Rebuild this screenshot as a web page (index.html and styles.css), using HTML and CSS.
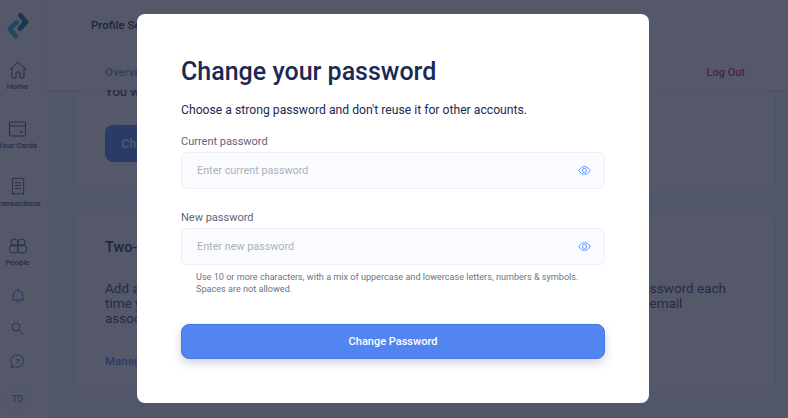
FILE: index.html
```html
<!DOCTYPE html>
<html>
<head>
  <meta charset="utf-8">
  <title>Change your password</title>
  <link rel="stylesheet" href="styles.css">
</head>
<body>

<div class="app">
  <nav class="sidebar">
    <svg class="logo" width="24" height="28" viewBox="0 0 24 28">
      <path d="M14.500 3.500l5.500 6.500-6 6.500" class="logo-dark"/>
      <path d="M10.500 10.500l-6.500 6 5.500 7.500" class="logo-teal"/>
    </svg>
    <a class="nav-item">
      <svg width="18" height="17" viewBox="0 0 18 17"><path d="M.5 8L9 .7 17.500 8M3 6.500v10h4v-6h4v6h4v-10" class="line"/></svg>
      <span>Home</span>
    </a>
    <a class="nav-item">
      <svg width="18" height="15" viewBox="0 0 18 15"><rect x=".5" y=".5" width="16" height="14" rx="1" class="line"/><path d="M.5 4.500h16M11 10.500h3" class="line"/></svg>
      <span>Your Cards</span>
    </a>
    <a class="nav-item">
      <svg width="14" height="19" viewBox="0 0 14 19"><path d="M1 .5h12v17l-2-1.500-2 1.500-2-1.500-2 1.500-2-1.500-2 1.500zM3.500 5h7M3.500 8h7M3.500 11h7" class="line"/></svg>
      <span>Transactions</span>
    </a>
    <a class="nav-item nav-people">
      <svg width="18" height="15" viewBox="0 0 18 15"><circle cx="5.500" cy="4" r="3.500" class="line"/><circle cx="12.500" cy="4" r="3.500" class="line"/><rect x=".5" y="6.500" width="9" height="8" rx="3.500" class="line"/><rect x="8.500" y="6.500" width="9" height="8" rx="3.500" class="line"/></svg>
      <span>People</span>
    </a>
    <a class="nav-icon">
      <svg width="14" height="15" viewBox="0 0 14 15"><path d="M1 12c1.500-1 1.500-2.500 1.500-5a4.500 4.500 0 0 1 9 0c0 2.500 0 4 1.500 5zM5.500 13.500c.5 1 2.500 1 3 0M7 2.500V.5" class="line blue"/></svg>
    </a>
    <a class="nav-icon">
      <svg width="13" height="13" viewBox="0 0 13 13"><circle cx="5" cy="5" r="4" class="line blue"/><path d="M8 8l4.500 4.500" class="line blue"/></svg>
    </a>
    <a class="nav-icon">
      <svg width="15" height="15" viewBox="0 0 15 15"><path d="M7.800 1a6 6 0 1 1-3 11.200L1 14l1-3.500A6 6 0 0 1 7.800 1z" class="line blue"/><text x="7.800" y="10" text-anchor="middle" class="help-mark">?</text></svg>
    </a>
    <div class="avatar">TD</div>
  </nav>

  <div class="main">
    <header class="topbar">
      <div class="page-title">Profile Settings</div>
      <div class="tabs">
        <span class="tab">Overview</span>
        <span class="logout">Log Out</span>
      </div>
    </header>
    <div class="content">
      <section class="card card-first">
        <p class="card-note">You will be asked to change your password regularly.</p>
        <button class="card-btn">Change Password</button>
      </section>
      <section class="card card-second">
        <h2>Two-Factor Authentication</h2>
        <p class="card-text">Add an extra layer of security to your account. You'll need to enter a code as well as your password each time you sign in. We will send the latest one-time code to your mobile phone number or the email associated with your account.</p>
        <a class="manage">Manage</a>
      </section>
    </div>
  </div>
</div>

<div class="overlay">
  <form class="modal">
    <h1>Change your password</h1>
    <p class="lead">Choose a strong password and don't reuse it for other accounts.</p>

    <label class="field-label">Current password</label>
    <div class="field">
      <span class="placeholder">Enter current password</span>
      <svg class="eye" width="13" height="9" viewBox="0 0 14 10"><path d="M.7 5C2.500 2 4.500.7 7 .7S11.500 2 13.300 5C11.500 8 9.500 9.300 7 9.300S2.500 8 .7 5z" class="eye-line"/><circle cx="7" cy="5" r="2.300" class="eye-line"/></svg>
    </div>

    <label class="field-label second">New password</label>
    <div class="field">
      <span class="placeholder">Enter new password</span>
      <svg class="eye" width="13" height="9" viewBox="0 0 14 10"><path d="M.7 5C2.500 2 4.500.7 7 .7S11.500 2 13.300 5C11.500 8 9.500 9.300 7 9.300S2.500 8 .7 5z" class="eye-line"/><circle cx="7" cy="5" r="2.300" class="eye-line"/></svg>
    </div>
    <p class="hint">Use 10 or more characters, with a mix of uppercase and lowercase letters, numbers &amp; symbols.<br>Spaces are not allowed.</p>

    <button type="button" class="submit">Change Password</button>
  </form>
</div>

</body>
</html>
```
FILE: styles.css
```css
* {
  box-sizing: border-box;
}
html, body {
  margin: 0;
  height: 100%;
  overflow: hidden;
}
body {
  font-family: "Roboto", "Liberation Sans", sans-serif;
  color: #1b2a55;
}
.app {
  display: flex;
  height: 418px;
  background: #f4f6fc;
}
.sidebar {
  width: 47px;
  flex: none;
  background: #fff;
  display: flex;
  flex-direction: column;
  align-items: center;
  padding: 12px 12px 0 0;
  overflow: hidden;
}
.logo {
  flex: none;
  margin-bottom: 21px;
}
.logo-dark, .logo-teal {
  fill: none;
  stroke-width: 5;
  stroke-linecap: round;
  stroke-linejoin: round;
}
.logo-dark {
  stroke: #1f6f95;
}
.logo-teal {
  stroke: #20c8d0;
}
.line {
  fill: none;
  stroke: #3c4a70;
  stroke-width: 1;
}
.line.blue {
  stroke: #3f6fd8;
}
.help-mark {
  font-size: 8px;
  font-weight: 500;
  fill: #3f6fd8;
}
.nav-item {
  display: flex;
  flex-direction: column;
  align-items: center;
  height: 58.5px;
  flex: none;
  width: 70px;
}
.nav-item.nav-people {
  height: 42px;
}
.nav-item svg {
  height: 18px;
  flex: none;
}
.nav-item span {
  margin-top: 3px;
  font-size: 8px;
  line-height: 10px;
  font-weight: 500;
  color: #3c4a70;
  white-space: nowrap;
}
.nav-icon {
  height: 33px;
  flex: none;
  display: flex;
  align-items: center;
  justify-content: center;
}
.avatar {
  width: 26px;
  height: 26px;
  border-radius: 50%;
  flex: none;
  margin-top: 8px;
  background: #fff;
  box-shadow: 0 0 2px rgba(30,40,70,.2);
  color: #10b0a0;
  font-size: 9px;
  font-weight: 500;
  display: flex;
  align-items: center;
  justify-content: center;
}
.main {
  flex: 1;
  display: flex;
  flex-direction: column;
  min-width: 0;
}
.topbar {
  height: 90px;
  flex: none;
  background: #fff;
  box-shadow: 0 1px 3px rgba(30,40,70,.12);
  position: relative;
  padding: 18px 43px 0 44px;
}
.page-title {
  font-size: 11.5px;
  font-weight: 500;
  color: #1b2a55;
}
.tabs {
  display: flex;
  justify-content: space-between;
  align-items: baseline;
  margin-top: 33px;
  font-size: 11.5px;
  font-weight: 500;
}
.tab {
  color: #8a92a8;
  margin-left: 14px;
}
.logout {
  color: #d81c58;
  font-size: 11px;
}
.content {
  flex: 1;
  padding: 0 14px 0 29px;
  overflow: hidden;
}
.card {
  background: #fff;
  border-radius: 8px;
  box-shadow: 0 1px 4px rgba(30,40,70,.08);
  padding: 0 29px;
}
.card-first {
  display: flow-root;
  height: 101px;
}
.card-second {
  height: 178px;
  margin-top: 22px;
  padding-top: 26px;
}
.card-note {
  margin: -6px 0 0;
  font-size: 13px;
  line-height: 15px;
  height: 24px;
  white-space: nowrap;
}
.card-text {
  margin: 25px 0 0;
  width: 630px;
  font-size: 13.5px;
  line-height: 15px;
  color: #33436f;
}
.card h2 {
  margin: 0;
  font-size: 14.5px;
  font-weight: 500;
  white-space: nowrap;
}
.card-btn {
  display: block;
  width: 130px;
  height: 37px;
  margin-top: 17px;
  border: 0;
  border-radius: 8px;
  background: #4f86f7;
  color: #fff;
  font: 500 12px "Roboto", sans-serif;
}
.manage {
  display: block;
  margin-top: 28px;
  font-size: 11.5px;
  font-weight: 500;
  color: #4f86f7;
}
.overlay {
  position: fixed;
  inset: 0;
  background: rgba(30,36,58,.76);
  backdrop-filter: blur(.5px);
  padding: 14px 0 0 137px;
}
.modal {
  width: 512px;
  height: 389px;
  background: #fff;
  border-radius: 8px;
  padding: 43px 44px 0;
}
.modal h1 {
  margin: 0;
  font-size: 25px;
  line-height: 30px;
  font-weight: 500;
  color: #1b2a55;
}
.lead {
  margin: 14px 0 0;
  font-size: 12.2px;
  line-height: 18px;
  color: #1b2a55;
}
.field-label {
  display: block;
  margin-top: 16px;
  font-size: 11px;
  line-height: 14px;
  color: #5d6579;
}
.field-label.second {
  margin-top: 22px;
}
.field {
  height: 37px;
  margin-top: 3px;
  background: #fafbff;
  border: 1px solid #edeff6;
  border-radius: 6px;
  padding: 0 13px 0 15px;
  display: flex;
  align-items: center;
  justify-content: space-between;
}
.placeholder {
  font-size: 10.8px;
  color: #abb0bd;
}
.eye-line {
  fill: none;
  stroke: #4f86f7;
  stroke-width: 1;
}
.hint {
  margin: 6px 0 0 15px;
  font-size: 9.1px;
  line-height: 12px;
  color: #6d7485;
}
.submit {
  display: block;
  width: 100%;
  height: 35px;
  margin-top: 29px;
  border: 1px solid #4677e6;
  border-radius: 8px;
  background: #5285f0;
  box-shadow: 0 4px 10px rgba(40,60,110,.22);
  color: #fff;
  font: 500 11px "Roboto", sans-serif;
}
```
